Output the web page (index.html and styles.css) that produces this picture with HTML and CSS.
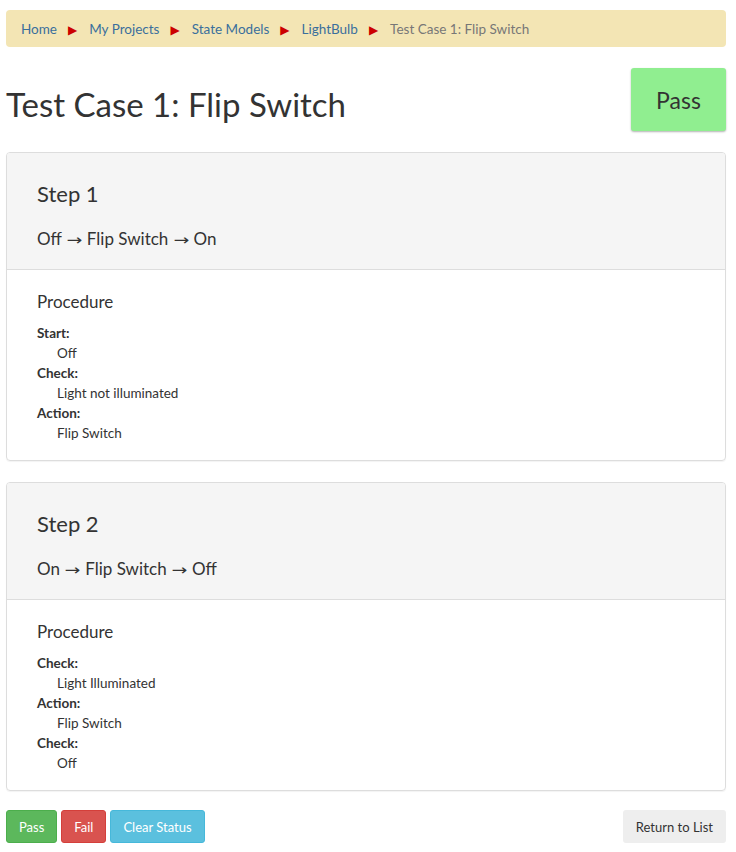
FILE: index.html
```html
<!DOCTYPE html>
<html lang="en">
<head>
    <meta charset="UTF-8">
    <title>Test Case 1: Flip Switch</title>
    <link rel="stylesheet" href="styles.css">
</head>
<body>
    <div class="page">
        <ol class="breadcrumb">
            <li><a href="#">Home</a></li>
            <li><a href="#">My Projects</a></li>
            <li><a href="#">State Models</a></li>
            <li><a href="#">LightBulb</a></li>
            <li class="current">Test Case 1: Flip Switch</li>
        </ol>

        <div class="title-row">
            <h1>Test Case 1: Flip Switch</h1>
            <div class="status pass">Pass</div>
        </div>

        <div class="panel">
            <div class="panel-heading">
                <h3>Step 1</h3>
                <p class="transition">Off <span class="arrow">&rarr;</span> Flip Switch <span class="arrow">&rarr;</span> On</p>
            </div>
            <div class="panel-body">
                <h4>Procedure</h4>
                <dl>
                    <dt>Start:</dt>
                    <dd>Off</dd>
                    <dt>Check:</dt>
                    <dd>Light not illuminated</dd>
                    <dt>Action:</dt>
                    <dd>Flip Switch</dd>
                </dl>
            </div>
        </div>

        <div class="panel">
            <div class="panel-heading">
                <h3>Step 2</h3>
                <p class="transition">On <span class="arrow">&rarr;</span> Flip Switch <span class="arrow">&rarr;</span> Off</p>
            </div>
            <div class="panel-body">
                <h4>Procedure</h4>
                <dl>
                    <dt>Check:</dt>
                    <dd>Light Illuminated</dd>
                    <dt>Action:</dt>
                    <dd>Flip Switch</dd>
                    <dt>Check:</dt>
                    <dd>Off</dd>
                </dl>
            </div>
        </div>

        <div class="actions">
            <button class="btn btn-pass">Pass</button>
            <button class="btn btn-fail">Fail</button>
            <button class="btn btn-clear">Clear Status</button>
            <button class="btn btn-return">Return to List</button>
        </div>
    </div>
</body>
</html>
```

FILE: styles.css
```css
body {
    font-family: Lato, "Open Sans", sans-serif;
    margin: 0;
    padding: 0;
    background-color: #fff;
    color: #333;
}
.page {
    padding: 10px 10px 0 6px;
}
.breadcrumb {
    display: flex;
    align-items: center;
    margin: 0;
    padding: 0 15px;
    height: 37px;
    list-style: none;
    background: #f3e5b4;
    border-radius: 4px;
    font-size: 13.5px;
}
.breadcrumb li + li::before {
    content: "\25B6";
    font-family: "DejaVu Sans", sans-serif;
    color: #c00;
    font-size: 12px;
    padding: 0 12px 0 11px;
}
.breadcrumb a {
    color: #3a6f9c;
    text-decoration: none;
}
.breadcrumb .current {
    color: #777;
}
.title-row {
    display: flex;
    justify-content: space-between;
    align-items: flex-start;
    margin: 21px 0;
}
h1 {
    margin: 16px 0 0 0;
    font-size: 33px;
    line-height: 40px;
    font-weight: normal;
}
.status {
    width: 95px;
    height: 63px;
    display: flex;
    align-items: center;
    justify-content: center;
    font-size: 23px;
    border-radius: 3px;
    box-shadow: 0 1px 2px rgba(0, 0, 0, 0.3);
}
.status.pass {
    background: #90ee90;
}
.panel {
    border: 1px solid #ddd;
    border-radius: 4px;
    margin-bottom: 19px;
    box-shadow: 0 1px 1px rgba(0, 0, 0, 0.05);
}
.panel + .panel {
    margin-top: 21px;
}
.panel-heading {
    background: #f5f5f5;
    border-bottom: 1px solid #ddd;
    padding: 26px 30px 18px;
    border-radius: 3px 3px 0 0;
}
h3 {
    margin: 0 0 18px 0;
    font-size: 22px;
    line-height: 30px;
    font-weight: normal;
}
.transition {
    margin: 0;
    font-size: 17px;
    line-height: 24px;
}
.arrow {
    display: inline-block;
    font-family: "DejaVu Sans", sans-serif;
    font-size: 15px;
    line-height: 0;
    margin: 0 2px;
    transform: scaleX(1.25);
}
.panel-body {
    padding: 20px 30px 17px;
}
h4 {
    margin: 0 0 9px 0;
    font-size: 17px;
    line-height: 24px;
    font-weight: normal;
}
dl {
    margin: 0;
    font-size: 13.5px;
    line-height: 20px;
}
dt {
    font-weight: bold;
}
dd {
    margin-left: 20px;
}
.actions {
    display: flex;
    gap: 4px;
}
.btn {
    font-family: inherit;
    font-size: 13px;
    height: 33px;
    padding: 0 12px;
    border: 1px solid transparent;
    border-radius: 3px;
    color: #fff;
    cursor: pointer;
}
.btn-pass {
    background: #5cb85c;
    border-color: #4cae4c;
}
.btn-fail {
    background: #d9534f;
    border-color: #d43f3a;
}
.btn-clear {
    background: #5bc0de;
    border-color: #46b8da;
}
.btn-return {
    margin-left: auto;
    background: #eee;
    color: #333;
}
```
